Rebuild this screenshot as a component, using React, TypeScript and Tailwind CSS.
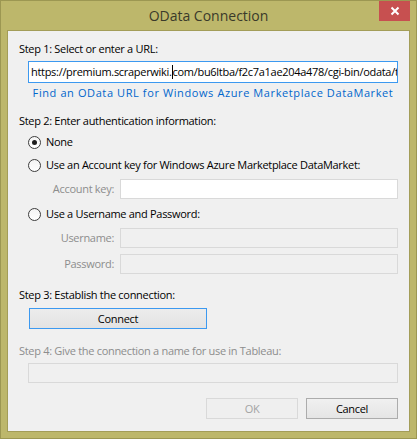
import React from "react"

const font = { fontFamily: '"Open Sans", "Noto Sans", sans-serif' }

function Radio({ checked, label }: { checked?: boolean; label: string }) {
  return (
    <div className="ml-[9px] flex h-4 items-center gap-[5px]">
      <span className="flex h-[13px] w-[13px] items-center justify-center rounded-full border border-[#3d3d3d] bg-gradient-to-b from-[#f4f4f4] to-[#ffffff]">
        {checked && <span className="h-[5px] w-[5px] rounded-full bg-[#1c1c1c]" />}
      </span>
      <span className="leading-4 text-black">{label}</span>
    </div>
  )
}

function FieldRow({ label, disabled }: { label: string; disabled?: boolean }) {
  return (
    <div className="flex h-5 items-center">
      <span className="w-[95px] text-right leading-4 text-[#8d8d8d]">{label}</span>
      <div
        className={
          disabled
            ? "ml-[6px] h-5 w-[278px] border border-[#d9d9d9] bg-[#f0f0f0]"
            : "ml-[6px] h-5 w-[278px] border border-[#d9d9d9] bg-white"
        }
      />
    </div>
  )
}

export default function App() {
  return (
    <div
      className="flex h-[439px] w-[417px] flex-col border border-[#9c9752] bg-[#bdb76b] text-[11px]"
      style={font}
    >
      {/* title bar */}
      <div className="relative flex h-[29px] items-start justify-center">
        <span className="mt-[5px] text-[14px] leading-5 text-[#3a3a2a]">OData Connection</span>
        <button className="absolute right-[6px] top-0 flex h-5 w-[31px] items-center justify-center bg-[#c75050]">
          <svg width="10" height="10" viewBox="0 0 10 10">
            <path d="M1.5 1.5l7 7M8.5 1.5l-7 7" stroke="white" strokeWidth="2" />
          </svg>
        </button>
      </div>

      {/* client area */}
      <div className="mx-[6px] flex h-[402px] flex-col border border-[#a39d58] bg-[#f0f0f0] px-[11px] pt-[10px] tracking-[-0.3px]">
        <div className="h-4 leading-4 text-black">Step 1: Select or enter a URL:</div>
        <div className="ml-[9px] mt-1 flex h-[22px] w-[370px] items-center overflow-hidden whitespace-nowrap border border-[#3c99f0] bg-white pl-[2px] leading-4 text-black">
          <span>https://premium.scraperwiki.</span>
          <span className="h-[14px] w-px shrink-0 bg-black" />
          <span>com/bu6ltba/f2c7a1ae204a478/cgi-bin/odata/tweets</span>
        </div>
        <div className="ml-[9px] mt-[2px] h-4 w-[370px] whitespace-nowrap text-center leading-4 tracking-[0.6px] text-[#0066cc]">
          Find an OData URL for Windows Azure Marketplace DataMarket
        </div>

        <div className="mt-3 h-4 leading-4 text-black">Step 2: Enter authentication information:</div>
        <div className="mt-[5px]">
          <Radio checked label="None" />
        </div>
        <div className="mt-[7px]">
          <Radio label="Use an Account key for Windows Azure Marketplace DataMarket:" />
        </div>
        <div className="mt-[6px]">
          <FieldRow label="Account key:" />
        </div>
        <div className="mt-[7px]">
          <Radio label="Use a Username and Password:" />
        </div>
        <div className="mt-[6px]">
          <FieldRow label="Username:" disabled />
        </div>
        <div className="mt-[6px]">
          <FieldRow label="Password:" disabled />
        </div>

        <div className="mt-[13px] h-4 leading-4 text-black">Step 3: Establish the connection:</div>
        <button className="ml-[10px] mt-[5px] h-[21px] w-[178px] border border-[#3c99f0] bg-gradient-to-b from-[#ececec] to-[#e3e3e3] leading-4 text-black">
          Connect
        </button>

        <div className="mt-[14px] h-4 leading-4 text-[#8d8d8d]">
          Step 4: Give the connection a name for use in Tableau:
        </div>
        <div className="ml-[9px] mt-1 h-5 w-[370px] border border-[#d9d9d9] bg-[#f0f0f0]" />

        <div className="mt-[15px] flex justify-end gap-2">
          <button className="h-[21px] w-[92px] border border-[#d9d9d9] bg-[#efefef] leading-4 text-[#a3a3a3]">
            OK
          </button>
          <button className="h-[21px] w-[92px] border border-[#acacac] bg-gradient-to-b from-[#f0f0f0] to-[#e5e5e5] leading-4 text-black">
            Cancel
          </button>
        </div>
      </div>
    </div>
  )
}
